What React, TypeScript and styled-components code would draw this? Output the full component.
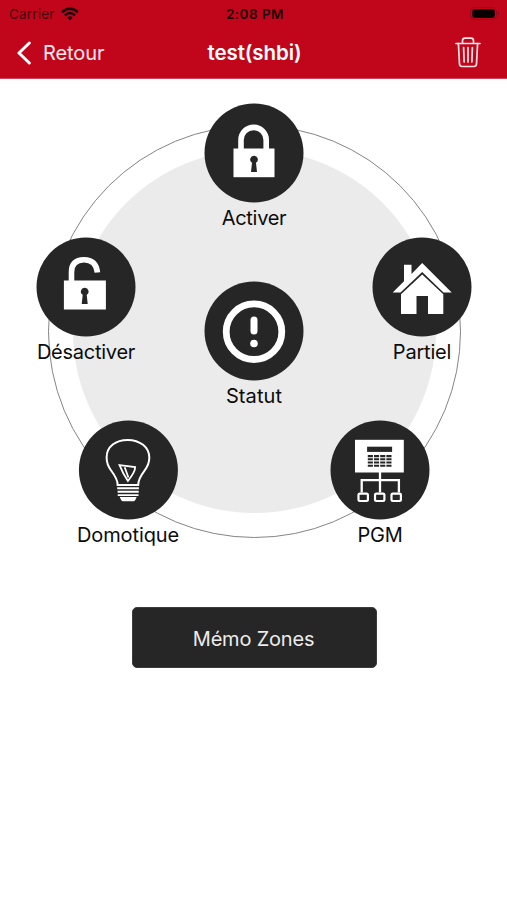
import React from "react";
import styled, { createGlobalStyle } from "styled-components";

const GlobalStyle = createGlobalStyle`
  * { box-sizing: border-box; }
  body {
    margin: 0;
    background: #fff;
    font-family: Inter, "Liberation Sans", sans-serif;
  }
`;

const Screen = styled.div`
  width: 507px;
  height: 900px;
  overflow: hidden;
  display: flex;
  flex-direction: column;
  background: #fff;
`;

const Header = styled.header`
  height: 79px;
  flex: none;
  background: #c1061c;
  border-bottom: 1px solid #d3455a;
`;

const StatusBar = styled.div`
  height: 27px;
  display: grid;
  grid-template-columns: 1fr auto 1fr;
  align-items: center;
  padding: 0 6px 0 9px;
  color: #1b0306;
`;

const Carrier = styled.div`
  display: flex;
  align-items: center;
  gap: 6px;
  font-size: 13.5px;
  line-height: 26px;
  letter-spacing: 0.2px;
  color: #43030c;
`;

const Clock = styled.div`
  font-size: 13.5px;
  font-weight: 600;
  line-height: 26px;
  letter-spacing: 0.45px;
`;

const BatterySlot = styled.div`
  display: flex;
  justify-content: flex-end;
  padding-right: 1px;
`;

const NavBar = styled.nav`
  height: 51px;
  display: grid;
  grid-template-columns: 1fr auto 1fr;
  align-items: center;
  padding: 0 26px 0 16px;
  color: #fff;
`;

const BackButton = styled.button`
  display: flex;
  align-items: center;
  gap: 11px;
  padding: 0;
  border: 0;
  background: none;
  color: #ffe9ec;
  font: 400 20px/26px Inter, sans-serif;
  letter-spacing: -0.1px;
`;

const Title = styled.h1`
  margin: 0 -6px 0 6px;
  font-size: 20.5px;
  font-weight: 600;
  line-height: 26px;
  letter-spacing: -0.1px;
`;

const TrashButton = styled.button`
  justify-self: end;
  display: flex;
  padding: 0;
  border: 0;
  background: none;
  color: #ffe3e7;
`;

const Dial = styled.main`
  position: relative;
  width: 413px;
  height: 413px;
  flex: none;
  margin: 46px 0 0 48px;
  border: 1px solid #858585;
  border-radius: 50%;
  background: radial-gradient(circle, #ebebeb 181px, #fff 182px);
`;

const DialItem = styled.button<{ $x: number; $y: number }>`
  position: absolute;
  left: ${(p) => p.$x - 49}px;
  top: ${(p) => p.$y - 126}px;
  transform: translate(-50%, -49.5px);
  display: flex;
  flex-direction: column;
  align-items: center;
  padding: 0;
  border: 0;
  background: none;
  color: #0c0c0c;
`;

const Disc = styled.span`
  width: 99px;
  height: 99px;
  border-radius: 50%;
  background: #262626;
  color: #fff;
  display: flex;
`;

const Caption = styled.span<{ $track: number }>`
  margin-top: 2px;
  font: 400 20px/26px Inter, sans-serif;
  letter-spacing: ${(p) => p.$track}px;
  white-space: nowrap;
`;

const MemoButton = styled.button`
  width: 245px;
  height: 61px;
  flex: none;
  align-self: center;
  margin: 69px 0 0 1px;
  padding: 2px 1px 0 0;
  border: 1px solid #3c3c3c;
  border-radius: 5px;
  background: #262626;
  color: #ececec;
  font: 400 20px/26px Inter, sans-serif;
  letter-spacing: -0.2px;
`;

const WifiIcon = () => (
  <svg width="18" height="14" viewBox="0 0 18 14" fill="none" stroke="#1b0306" strokeWidth="2.5">
    <path d="M1 5.2Q9 -2 17 5.2M3.9 8.3Q9 3.8 14.1 8.3" />
    <path d="M9 13.3L6.2 10.4Q9 8.2 11.8 10.4Z" fill="#1b0306" stroke="none" />
  </svg>
);

const BatteryIcon = () => (
  <svg width="31" height="15" viewBox="0 0 31 15">
    <rect x="1.5" y="1.5" width="26" height="12" rx="4" fill="none" stroke="#9a0517" />
    <rect x="3.3" y="3.2" width="22.5" height="8.8" rx="2.4" fill="#080001" />
    <path d="M29 5.6Q31 7.5 29 9.4Z" fill="#8a0414" />
  </svg>
);

const BackIcon = () => (
  <svg width="16" height="24" viewBox="0 0 16 24" fill="none" stroke="#fff" strokeWidth="3" strokeLinecap="round" strokeLinejoin="round">
    <path d="M13.3 2L3 12L13.3 22" />
  </svg>
);

const TrashIcon = () => (
  <svg width="26" height="31" viewBox="0 0 26 31" fill="none" stroke="currentColor" strokeWidth="1.7" strokeLinecap="round" strokeLinejoin="round">
    <path d="M1 6.5H25M7.5 6.3V3.8Q7.5 1.2 10 1.2H16Q18.5 1.2 18.5 3.8V6.3" />
    <path d="M3.4 6.7L4.5 27Q4.7 29.5 7.2 29.5H18.8Q21.3 29.5 21.5 27L22.6 6.7" />
    <path d="M8.6 10.5L9.1 25M13 10.5V25M17.4 10.5L16.9 25" />
  </svg>
);

const Keyhole = () => (
  <path d="M50 52.3a3.7 3.7 0 0 1 2 6.9L53 68.5H47L48 59.2a3.7 3.7 0 0 1 2-6.9Z" fill="#262626" />
);

const LockIcon = () => (
  <svg width="99" height="99" viewBox="0.5 0 99 99">
    <path d="M37 46V36.5a12.6 12.6 0 0 1 25.2 0V46" fill="none" stroke="#fff" strokeWidth="5.6" />
    <rect x="29.5" y="45" width="41" height="28.7" fill="#fff" />
    <Keyhole />
  </svg>
);

const UnlockIcon = () => (
  <svg width="99" height="99" viewBox="0 0 99 99">
    <path d="M35 44V34.7Q35 22.5 47.5 22.3Q59.5 22.3 60.9 35" fill="none" stroke="#fff" strokeWidth="5.6" />
    <rect x="27.4" y="43" width="42" height="29" fill="#fff" />
    <g transform="translate(-1.8 -2)"><Keyhole /></g>
  </svg>
);

const HomeIcon = () => (
  <svg width="99" height="99" viewBox="0 0 99 99" fill="#fff">
    <path d="M20.2 55L31.5 43.8V27.2H39V36.4L49.7 25.4L79.2 55H71L49.7 34.5L28 55Z" />
    <path d="M49.7 37L70.8 56.7V76.5H55.5V58.5H44V76.5H28.5V56.7Z" />
  </svg>
);

const StatusIcon = () => (
  <svg width="99" height="99" viewBox="0 0 99 99" fill="none" stroke="#fff" strokeLinecap="round">
    <circle cx="49.5" cy="50.2" r="27.8" strokeWidth="6.8" />
    <path d="M49.5 38.5V49.5" strokeWidth="7" />
    <circle cx="49.5" cy="62" r="3.8" fill="#fff" stroke="none" />
  </svg>
);

const BulbIcon = () => (
  <svg width="99" height="99" viewBox="0 0 99 99" fill="none" stroke="#fff" strokeWidth="2">
    <path d="M38.7 64.5Q39 59 32.2 50C28.5 45 27.7 41 27.7 37C27.7 26 37 19.4 48.8 19.4C61 19.4 70.4 26.6 70.4 37.3C70.4 42 68.6 46.4 65.3 50.6Q59.3 58.5 59.3 64.5Z" />
    <path d="M40.6 44.6L56.2 46.6Q56.5 51 49 60.5Q44 53 40.6 44.6ZM45.8 46.8L49.5 57" strokeWidth="1.8" />
    <path d="M38.3 67.8H60M38.7 71.2H59.8M38.8 74.6H59.6" strokeWidth="1.9" />
    <path d="M40.8 76.5H57.8L56.4 79.6Q56 80.7 54.7 80.7H43.9Q42.6 80.7 42.2 79.6Z" fill="#fff" stroke="none" />
  </svg>
);

const keypadRows = [34.8, 38, 41.2, 44.4];
const outputs = [28, 44.5, 61];

const PgmIcon = () => (
  <svg width="99" height="99" viewBox="0 0 99 99">
    <rect x="24.5" y="19.3" width="48.8" height="32.7" fill="#fff" />
    <rect x="36.6" y="26.2" width="25" height="5.2" fill="#262626" />
    {keypadRows.map((y) => (
      <path key={y} d={`M37.3 ${y + 0.8}H61`} stroke="#262626" strokeWidth="2.1" strokeDasharray="5.1 1.1" />
    ))}
    <path d="M49.5 51V72M31.2 72V59.7H68.4V72" fill="none" stroke="#fff" strokeWidth="2.3" />
    {outputs.map((x) => (
      <rect key={x} x={x} y="73.1" width="9.4" height="7.4" rx="1.4" fill="#262626" stroke="#fff" strokeWidth="2.2" />
    ))}
  </svg>
);

const items = [
  { label: "Activer", x: 254, y: 152.7, track: -0.3, Icon: LockIcon },
  { label: "Désactiver", x: 86, y: 286.5, track: -0.25, Icon: UnlockIcon },
  { label: "Partiel", x: 422, y: 286.5, track: -0.2, Icon: HomeIcon },
  { label: "Statut", x: 254, y: 330.5, track: 0.1, Icon: StatusIcon },
  { label: "Domotique", x: 128, y: 469.5, track: -0.1, Icon: BulbIcon },
  { label: "PGM", x: 380, y: 469.5, track: -0.3, Icon: PgmIcon },
];

export default function App() {
  return (
    <Screen>
      <GlobalStyle />
      <Header>
        <StatusBar>
          <Carrier>
            Carrier
            <WifiIcon />
          </Carrier>
          <Clock>2:08 PM</Clock>
          <BatterySlot>
            <BatteryIcon />
          </BatterySlot>
        </StatusBar>
        <NavBar>
          <BackButton>
            <BackIcon />
            Retour
          </BackButton>
          <Title>test(shbi)</Title>
          <TrashButton aria-label="Supprimer">
            <TrashIcon />
          </TrashButton>
        </NavBar>
      </Header>
      <Dial>
        {items.map(({ label, x, y, track, Icon }) => (
          <DialItem key={label} $x={x} $y={y}>
            <Disc>
              <Icon />
            </Disc>
            <Caption $track={track}>{label}</Caption>
          </DialItem>
        ))}
      </Dial>
      <MemoButton>Mémo Zones</MemoButton>
    </Screen>
  );
}
